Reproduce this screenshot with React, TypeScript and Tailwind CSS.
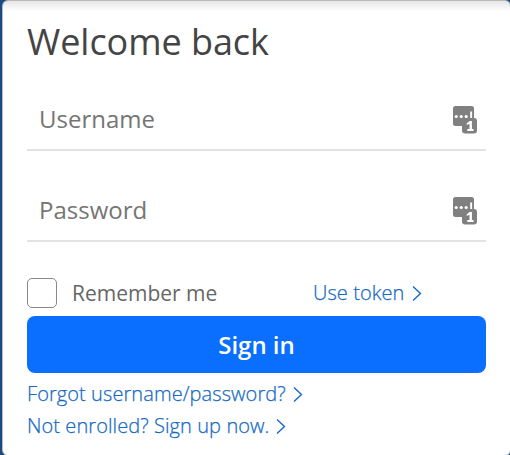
import type { ReactNode } from "react";

function PasswordManagerIcon() {
  return (
    <svg width="26" height="30" viewBox="0 0 26 30" className="shrink-0">
      <rect x="1" y="1" width="21" height="20" rx="2.5" fill="#808080" />
      <rect x="10" y="13" width="15" height="15.5" rx="3" fill="#808080" />
      <g fill="#fff">
        <circle cx="4.2" cy="11.5" r="1.6" />
        <circle cx="9.2" cy="11.5" r="1.6" />
        <circle cx="14.2" cy="11.5" r="1.6" />
        <rect x="18.2" y="6.5" width="1.9" height="6.5" />
        <path d="M14.8 18.2 17.6 16h2.3v8h1.6v2h-6.2v-2h2.2v-5.2l-2.7 1.2z" />
      </g>
    </svg>
  );
}

function Field({ label }: { label: string }) {
  return (
    <label className="flex h-[61px] items-center justify-between border-b-2 border-[#e3e3e3] pl-3 pr-2 text-[24px] leading-none text-[#757575]">
      <span className="pb-[2px]">{label}</span>
      <PasswordManagerIcon />
    </label>
  );
}

function TextLink({ children }: { children: ReactNode }) {
  return (
    <a className="flex h-8 items-center gap-[7px] whitespace-nowrap text-[20px] font-light tracking-[0.08px] text-[#1469c5] [-webkit-text-stroke:0.25px_#1469c5]">
      <span>{children}</span>
      <svg width="10" height="17" viewBox="0 0 10 17" fill="none" stroke="currentColor" strokeWidth="1.4">
        <path d="M1 1.5 8.5 8.5 1 15.5" />
      </svg>
    </a>
  );
}

export default function App() {
  return (
    <main className="h-[455px] w-[510px] overflow-hidden bg-[#1c4a80] pl-[2px] font-['Open_Sans',sans-serif]">
      <section className="h-[456px] w-[509px] rounded-[6px] border border-[#b9b9b9] bg-[linear-gradient(#e6e6e6,#fff_10px)] px-6">
        <h1 className="h-[89px] pt-[17px] text-[36px] leading-[48px] tracking-[-0.05px] text-[#444]">Welcome back</h1>
        <Field label="Username" />
        <div className="h-[30px]" />
        <Field label="Password" />
        <div className="mt-9 flex h-[30px] items-center">
          <span className="size-[30px] rounded-[5px] border border-[#888] bg-white" />
          <span className="ml-[15px] w-[241px] text-[21px] leading-7 text-[#666]">Remember me</span>
          <TextLink>Use token</TextLink>
        </div>
        <button className="mt-2 flex h-[57px] w-[459px] items-center justify-center rounded-[8px] bg-[#0a6eff] text-[24px] font-semibold text-white">Sign in</button>
        <div className="mt-[5px]">
          <TextLink>Forgot username/password?</TextLink>
          <TextLink>Not enrolled? Sign up now.</TextLink>
        </div>
      </section>
    </main>
  );
}
